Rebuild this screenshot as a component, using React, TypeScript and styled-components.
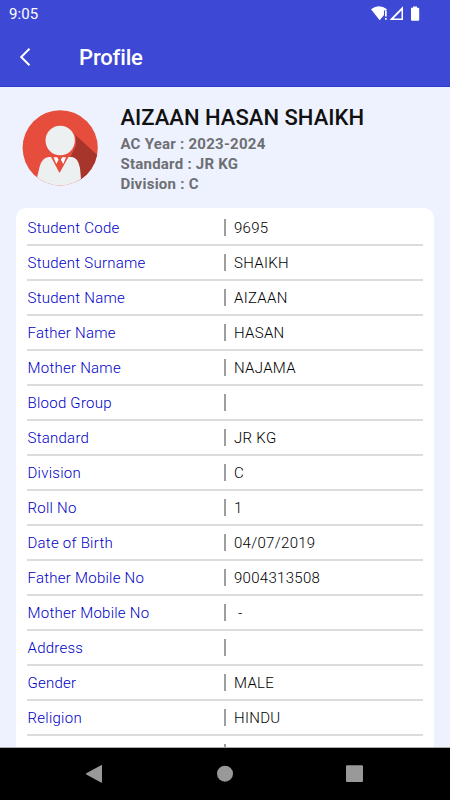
import React from "react";
import styled, { createGlobalStyle } from "styled-components";

const GlobalStyle = createGlobalStyle`
  *, *::before, *::after { box-sizing: border-box; }
  body { margin: 0; font-family: Roboto, "Liberation Sans", sans-serif; }
`;

const Screen = styled.div`
  width: 450px;
  height: 800px;
  display: flex;
  flex-direction: column;
  overflow: hidden;
  background: #eef2ff;
`;

const TopBar = styled.header`
  flex: none;
  height: 87px;
  background: #3d49d5;
  border-bottom: 1px solid #2e3bd0;
  color: #fff;
`;

const StatusBar = styled.div`
  height: 28px;
  padding: 0 30px 0 9px;
  display: flex;
  align-items: center;
  justify-content: space-between;
`;

const Clock = styled.span`
  font-size: 15px;
  line-height: 28px;
  letter-spacing: 0.1px;
`;

const StatusIcons = styled.svg`
  display: block;
  margin-top: -2px;
`;

const TitleRow = styled.div`
  height: 58px;
  display: flex;
  align-items: center;
  padding-left: 18px;
`;

const BackButton = styled.button`
  border: 0;
  padding: 0;
  width: 61px;
  height: 24px;
  background: none;
  color: inherit;
  text-align: left;
`;

const Title = styled.h1`
  margin: 2px 0 0;
  font-size: 22px;
  font-weight: 500;
  line-height: 28px;
  letter-spacing: -0.15px;
`;

const Content = styled.main`
  flex: 1;
  min-height: 0;
  overflow: hidden;
`;

const Summary = styled.section`
  height: 121px;
  padding: 18px 0 0 22px;
  display: flex;
  gap: 22.4px;
`;

const Avatar = styled.svg`
  flex: none;
  display: block;
  margin-top: 4px;
`;

const Name = styled.h2`
  margin: 0 0 3px;
  font-size: 22px;
  font-weight: 500;
  line-height: 26px;
  letter-spacing: 0.02px;
  color: #111;
  white-space: nowrap;
`;

const Detail = styled.p`
  margin: 0;
  font-size: 15px;
  font-weight: 700;
  line-height: 20px;
  letter-spacing: 0.25px;
  color: #6d6f73;
`;

const Card = styled.dl`
  margin: 0 16px;
  padding: 3px 11px 0;
  border-radius: 10px 10px 0 0;
  background: #fff;
`;

const Row = styled.div`
  height: 35px;
  display: grid;
  grid-template-columns: 197px 1fr;
  align-items: center;
  border-bottom: 2px solid #dcdcdc;
  font-size: 15px;
  font-weight: 350;
  line-height: 19px;
`;

const Label = styled.dt`
  padding: 2px 0 0 0.5px;
  letter-spacing: 0.25px;
  color: #0000c8;
`;

const Value = styled.dd`
  margin: 0;
  height: 17px;
  padding-left: 8px;
  border-left: 2px solid #9e9e9e;
  letter-spacing: 0.3px;
  color: #000;
  white-space: pre;
`;

const NavBar = styled.nav`
  flex: none;
  height: 53px;
  border-top: 1px solid #a9adad;
  background: #000;
`;

const details = ["AC Year : 2023-2024", "Standard : JR KG", "Division : C"];

const fields: [string, string][] = [
  ["Student Code", "9695"],
  ["Student Surname", "SHAIKH"],
  ["Student Name", "AIZAAN"],
  ["Father Name", "HASAN"],
  ["Mother Name", "NAJAMA"],
  ["Blood Group", ""],
  ["Standard", "JR KG"],
  ["Division", "C"],
  ["Roll No", "1"],
  ["Date of Birth", "04/07/2019"],
  ["Father Mobile No", "9004313508"],
  ["Mother Mobile No", " -"],
  ["Address", ""],
  ["Gender", "MALE"],
  ["Religion", "HINDU"],
  ["", ""],
];

export default function App() {
  return (
    <>
      <GlobalStyle />
      <Screen>
        <TopBar>
          <StatusBar>
            <Clock>9:05</Clock>
            <StatusIcons width="50" height="16" viewBox="370 5 50 16" fill="#fff">
              <path d="M371 9.2Q379 3.2 387 9.2L386 10.5H384V15L379.7 20.2Z" />
              <path d="M385 10.5h1.7v6H385zM385 18h1.7v1.7H385z" />
              <path fillRule="evenodd" d="M389.5 20L403 6.3V20ZM394 18.4H401.5V10.6L394 18.1Z" />
              <path d="M411 7.7h2V6.5h4v1.2h1.2q1 0 1 1v11q0 1-1 1H412q-1 0-1-1Z" />
            </StatusIcons>
          </StatusBar>
          <TitleRow>
            <BackButton aria-label="Back">
              <svg width="14" height="24" viewBox="0 0 14 24" fill="none" stroke="#fff" strokeWidth="2">
                <path d="M11.5 3.7L3.2 12l8.3 8.3" />
              </svg>
            </BackButton>
            <Title>Profile</Title>
          </TitleRow>
        </TopBar>
        <Content>
          <Summary>
            <Avatar width="76" height="77" viewBox="22 109 76 77">
              <defs>
                <clipPath id="avatar-disc">
                  <circle cx="60.2" cy="147.8" r="37.6" />
                </clipPath>
              </defs>
              <g clipPath="url(#avatar-disc)">
                <rect x="22" y="109" width="77" height="77" fill="#e64d3c" />
                <path d="M75 134.5L100 157.5V190H80L68 157Z" fill="#a8352b" />
                <path d="M82 190L80 168Q78 157.5 72 157H49Q42 157.5 39.5 167L36.5 180V190Z" fill="#ecf0f0" />
                <path d="M64 153L76 145L70.5 157H65.5Z" fill="#e64d3c" />
                <path d="M50.5 156L59.5 173L69 156Z" fill="#e64d3c" />
                <path d="M53.5 157.3L56.3 164L58.6 159.8L57.2 157.3ZM66 157.3L63.3 164L60.8 159.8L62.2 157.3Z" fill="#fff" />
                <circle cx="60.2" cy="140.8" r="16" fill="#e64d3c" />
                <circle cx="60.2" cy="140.5" r="14.7" fill="#ecf0f0" />
              </g>
            </Avatar>
            <div>
              <Name>AIZAAN HASAN SHAIKH</Name>
              {details.map((line) => (
                <Detail key={line}>{line}</Detail>
              ))}
            </div>
          </Summary>
          <Card>
            {fields.map(([label, value]) => (
              <Row key={label}>
                <Label>{label}</Label>
                <Value>{value}</Value>
              </Row>
            ))}
          </Card>
        </Content>
        <NavBar>
          <svg width="450" height="52" viewBox="0 748 450 52" fill="#999">
            <path d="M86.3 773.2q-.8.6 0 1.2L101 782.6q1 .5 1-.6V765.8q0-1.1-1-.6Z" />
            <circle cx="225" cy="773.7" r="8" />
            <rect x="346" y="765.3" width="17" height="16.7" rx="1" />
          </svg>
        </NavBar>
      </Screen>
    </>
  );
}
